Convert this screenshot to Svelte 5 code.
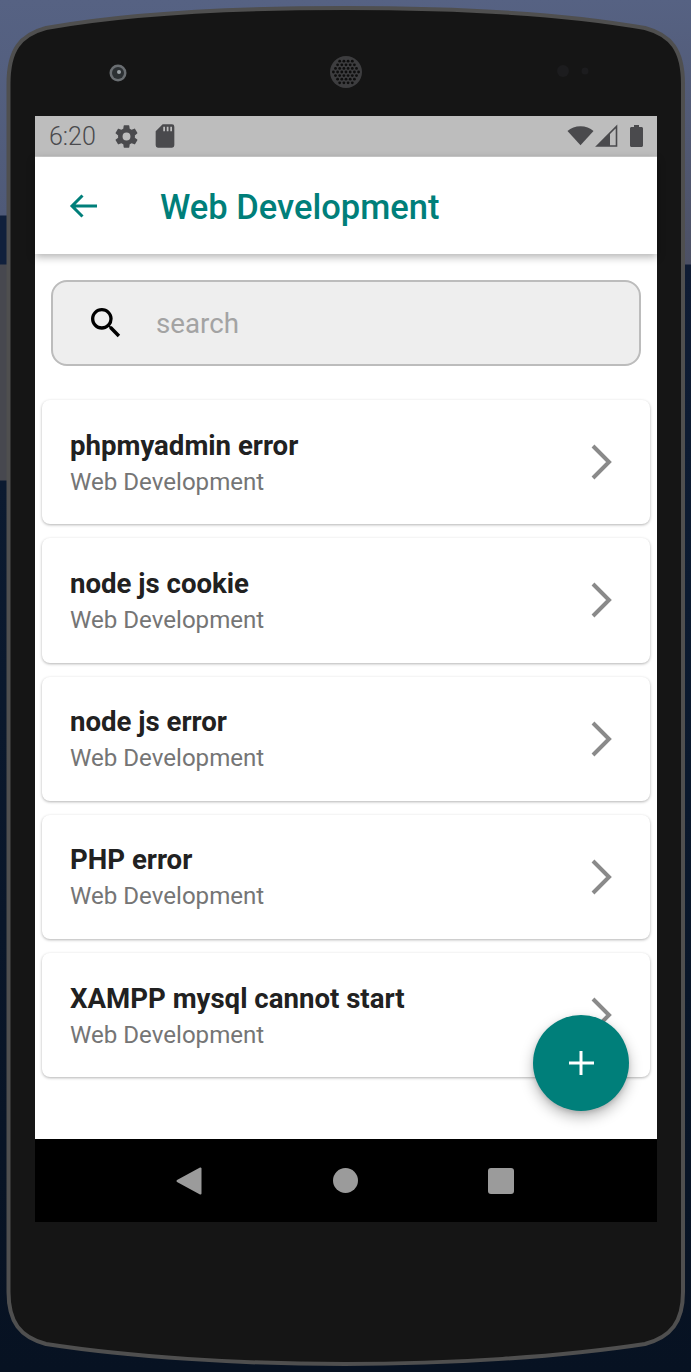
<script>
	const topics = [
		{ title: 'phpmyadmin error', category: 'Web Development' },
		{ title: 'node js cookie', category: 'Web Development' },
		{ title: 'node js error', category: 'Web Development' },
		{ title: 'PHP error', category: 'Web Development' },
		{ title: 'XAMPP mysql cannot start', category: 'Web Development' }
	]

	// speaker grille holes
	const holes = []
	for (let row = -3; row <= 3; row++) {
		for (let col = -3; col <= 3; col++) {
			const x = col * 4.2 + (row % 2 ? 2.1 : 0)
			const y = row * 3.6
			if (x * x + y * y < 170) holes.push({ x, y })
		}
	}
</script>

<div class="page">
	<!-- device shell sits behind the screen -->
	<svg class="shell" width="691" height="1372" viewBox="0 0 691 1372">
		<path class="body" d="M8.500 84 C8.500 50 20 35 46 28 C130 13 240 8 345 8 C450 8 560 13 645 28 C671 35 683 50 683 84 L683 1292 C683 1322 671 1337 645 1344 C560 1357 450 1364 345 1364 C240 1364 130 1357 46 1344 C20 1337 8.500 1322 8.500 1292 Z" />
		<circle cx="118" cy="73" r="8.500" fill="#6a6e72" />
		<circle cx="118" cy="73" r="6" fill="#2c3033" />
		<circle cx="119" cy="72" r="2" fill="#9aa0a4" />
		<circle cx="346" cy="72" r="16" fill="#3d3d3f" />
		{#each holes as hole}
			<circle cx={346 + hole.x} cy={72 + hole.y} r="1.400" fill="#0e0e0e" />
		{/each}
		<circle cx="563" cy="71" r="6" fill="#1c1c1e" />
		<circle cx="585" cy="71" r="3.500" fill="#1c1c1e" />
	</svg>

	<div class="screen">
		<div class="status">
			<span class="time">6:20</span>
			<svg width="27" height="27" viewBox="0 0 24 24" class="gear">
				<path fill="#4a4a4d" d="M19.4 13c.04-.33.1-.66.1-1s-.06-.67-.1-1l2.1-1.65c.2-.15.25-.42.13-.64l-2-3.46c-.12-.22-.39-.3-.61-.22l-2.49 1c-.52-.4-1.08-.73-1.69-.98l-.38-2.65A.49.49 0 0 0 14 2h-4c-.25 0-.46.18-.49.42l-.38 2.65c-.61.25-1.17.59-1.69.98l-2.49-1c-.23-.09-.49 0-.61.22l-2 3.46c-.13.22-.07.49.12.64L4.6 11c-.04.33-.1.66-.1 1s.06.67.1 1l-2.14 1.65c-.19.15-.25.42-.12.64l2 3.46c.12.22.39.3.61.22l2.49-1c.52.4 1.08.73 1.69.98l.38 2.65c.03.24.24.42.49.42h4c.25 0 .46-.18.49-.42l.38-2.65c.61-.25 1.17-.59 1.69-.98l2.49 1c.23.09.49 0 .61-.22l2-3.46c.12-.22.07-.49-.12-.64L19.4 13zM12 15.5A3.5 3.5 0 1 1 12 8.5a3.5 3.5 0 0 1 0 7z" />
			</svg>
			<svg width="28" height="28" viewBox="0 0 24 24" class="card-icon">
				<path fill="#4a4a4d" d="M18 2h-8L4 8v12a2 2 0 0 0 2 2h12a2 2 0 0 0 2-2V4a2 2 0 0 0-2-2zm-6 6h-1.500V4H12v4zm3 0h-1.500V4H15v4zm3 0h-1.500V4H18v4z" />
			</svg>
			<span class="spacer"></span>
			<svg width="27" height="24" viewBox="0 0 28 24" class="wifi">
				<path fill="#4a4a4d" d="M14 21.500 .5 6.800C4 3.800 8.800 2 14 2s10 1.800 13.500 4.800z" />
			</svg>
			<svg width="24" height="24" viewBox="0 0 24 24" class="signal">
				<path fill="none" stroke="#4a4a4d" stroke-width="1.600" d="M2 22 21.500 2.500V22z" />
				<path fill="#4a4a4d" d="M2 22 15 9v13z" />
			</svg>
			<svg width="16" height="24" viewBox="0 0 16 24" class="battery">
				<path fill="#4a4a4d" d="M5 1h5v2h2.500c.8 0 1.500.7 1.500 1.500V21.500c0 .8-.7 1.500-1.500 1.500h-10C1.700 23 1 22.300 1 21.500V4.500C1 3.700 1.700 3 2.500 3H5z" />
			</svg>
		</div>

		<header class="appbar">
			<svg width="32" height="32" viewBox="0 0 32 32" class="back">
				<path fill="none" stroke="#007f7a" stroke-width="3" d="M29 16H4M14.500 5.500 4 16l10.500 10.500" />
			</svg>
			<h1>Web Development</h1>
		</header>

		<main class="content">
			<div class="search">
				<svg width="40" height="40" viewBox="0 0 24 24">
					<path fill="#000" d="M15.500 14h-.79l-.28-.27A6.470 6.470 0 0 0 16 9.500 6.500 6.500 0 1 0 9.500 16c1.610 0 3.090-.59 4.230-1.570l.27.28v.79l5 4.990L20.490 19l-4.990-5zm-6 0C7.010 14 5 11.990 5 9.500S7.010 5 9.500 5 14 7.010 14 9.500 11.990 14 9.500 14z" />
				</svg>
				<span class="placeholder">search</span>
			</div>

			<div class="list">
				{#each topics as topic}
					<div class="card">
						<div class="text">
							<div class="title">{topic.title}</div>
							<div class="category">{topic.category}</div>
						</div>
						<svg width="24" height="38" viewBox="0 0 24 38" class="chevron">
							<path fill="none" stroke="#8a8a8a" stroke-width="4" d="M4 3l16 16L4 35" />
						</svg>
					</div>
				{/each}
			</div>

			<button class="fab" aria-label="Add">
				<svg width="26" height="26" viewBox="0 0 26 26">
					<path fill="#fff" d="M11.500 1h3v10.500H26v3H14.500V25h-3V14.500H1v-3h10.500z" />
				</svg>
			</button>
		</main>

		<nav class="softkeys">
			<svg width="26" height="28" viewBox="0 0 26 28">
				<path fill="#9b9b9b" stroke="#9b9b9b" stroke-width="2" stroke-linejoin="round" d="M1.500 14 24.500 1.500v25z" />
			</svg>
			<span class="dot"></span>
			<span class="square"></span>
		</nav>
	</div>
</div>

<style>
	:global(body) {
		margin: 0;
		background: #0a1626;
	}

	.page {
		position: relative;
		width: 691px;
		height: 1372px;
		padding-top: 116px;
		box-sizing: border-box;
		overflow: hidden;
		background:
			linear-gradient(to bottom, #566283 0, #4f5a78 215px, #10203c 216px, #10203c 264px, #47484f 265px, #47484f 480px, #0b1a30 481px, #071222 1372px) left / 346px 100% no-repeat,
			linear-gradient(to bottom, #566283 0, #4c5064 264px, #0f1c34 265px, #0b1a30 600px, #071222 1372px) right / 346px 100% no-repeat;
		font-family: Roboto, "Liberation Sans", sans-serif;
	}

	.shell {
		position: absolute;
		top: 0;
		left: 0;
	}

	.body {
		fill: #151515;
		stroke: #4f4f4f;
		stroke-width: 4;
	}

	.screen {
		position: relative;
		width: 622px;
		height: 1106px;
		margin-left: 35px;
		display: flex;
		flex-direction: column;
		background: #fff;
	}

	.status {
		height: 41px;
		flex: none;
		display: flex;
		align-items: center;
		padding: 0 12px 0 14px;
		background: #bdbdbd;
		border-bottom: 1px solid #d0d0d0;
		box-sizing: border-box;
	}

	.time {
		font-size: 25px;
		font-weight: 300;
		color: #4a4a4d;
		width: 52px;
	}

	.gear {
		margin-left: 12px;
	}

	.card-icon {
		margin-left: 11px;
	}

	.spacer {
		flex: 1;
	}

	.signal {
		margin-left: 1px;
	}

	.battery {
		margin-left: 10px;
	}

	.appbar {
		height: 97px;
		flex: none;
		display: flex;
		align-items: center;
		padding-left: 33px;
		background: #fff;
		box-shadow: 0 3px 8px rgba(0, 0, 0, 0.3);
		position: relative;
		z-index: 1;
	}

	.back {
		flex: none;
	}

	h1 {
		margin: 0 0 0 60px;
		padding-top: 4px;
		font-size: 34.500px;
		font-weight: 500;
		color: #007f7a;
		line-height: 1;
	}

	.content {
		position: relative;
		flex: 1;
		padding: 26px 7px 0;
	}

	.search {
		height: 86px;
		margin: 0 9px;
		box-sizing: border-box;
		display: flex;
		align-items: center;
		padding-left: 33px;
		gap: 30px;
		border: 2px solid #bcbcbc;
		border-radius: 16px;
		background: #eeeeee;
	}

	.placeholder {
		font-size: 27.700px;
		color: #a3a3a3;
	}

	.list {
		margin-top: 34px;
		display: flex;
		flex-direction: column;
		gap: 14px;
	}

	.card {
		height: 124.250px;
		box-sizing: border-box;
		display: flex;
		align-items: center;
		justify-content: space-between;
		padding: 0 37px 0 28px;
		border-radius: 8px;
		background: #fff;
		box-shadow: 0 1px 3px rgba(0, 0, 0, 0.3);
	}

	.text {
		padding-top: 2px;
	}

	.title {
		font-size: 27.600px;
		font-weight: 700;
		color: #212121;
		line-height: 34px;
	}

	.category {
		font-size: 24.100px;
		color: #757575;
		line-height: 32px;
		margin-top: 3px;
	}

	.fab {
		position: absolute;
		right: 28px;
		bottom: 28px;
		width: 96px;
		height: 96px;
		padding: 0;
		border: 0;
		border-radius: 50%;
		display: flex;
		align-items: center;
		justify-content: center;
		background: #007f7a;
		box-shadow: 0 6px 14px rgba(0, 0, 0, 0.28), 0 2px 4px rgba(0, 0, 0, 0.12);
	}

	.softkeys {
		height: 83px;
		flex: none;
		display: flex;
		align-items: center;
		background: #000;
		padding-left: 141px;
		position: relative;
	}

	.dot {
		width: 25px;
		height: 25px;
		margin-left: 131px;
		border-radius: 50%;
		background: #9b9b9b;
	}

	.square {
		width: 26px;
		height: 26px;
		margin-left: 130px;
		border-radius: 3px;
		background: #9b9b9b;
	}
</style>
